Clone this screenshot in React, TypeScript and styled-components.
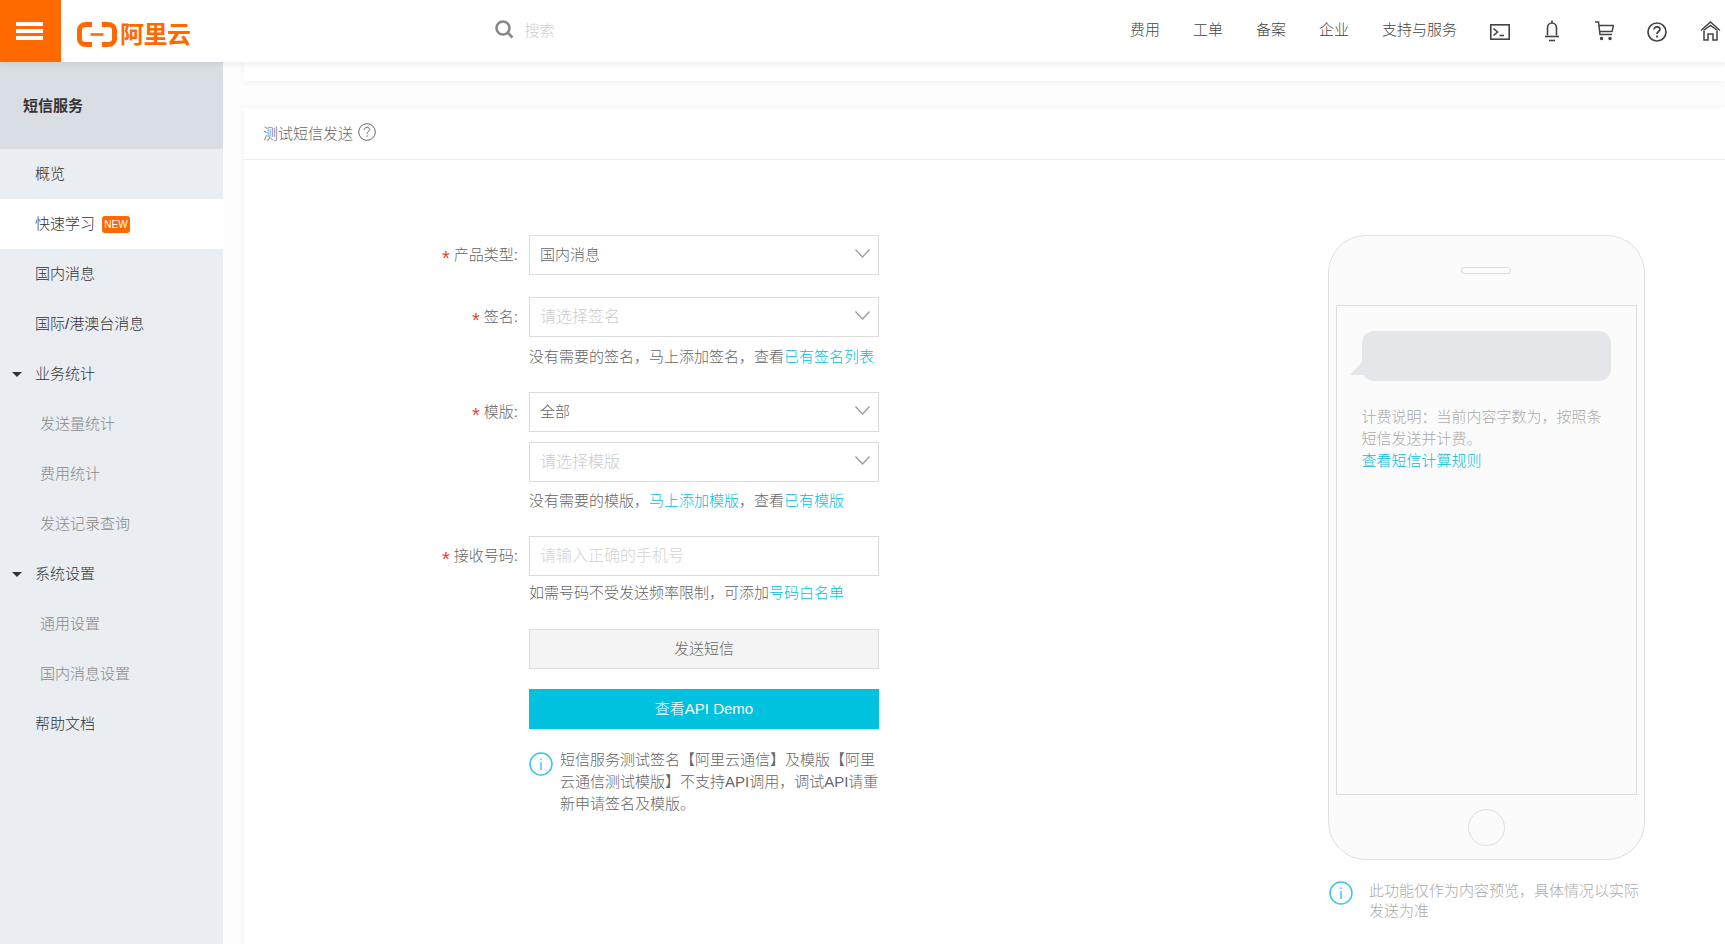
import React from 'react'
import styled, { createGlobalStyle } from 'styled-components'

const GlobalStyle = createGlobalStyle`
  html, body {
    margin: 0;
    padding: 0;
    height: 100%;
    overflow: hidden;
    background: #fdfdfd;
    font-family: "Liberation Sans", "Noto Sans CJK SC", sans-serif;
    font-size: 15px;
    font-weight: 300;
    color: #666;
  }
  * { box-sizing: border-box; }
`

const Page = styled.div`
  height: 944px;
  display: flex;
  flex-direction: column;
  overflow: hidden;
`

const Header = styled.header`
  height: 62px;
  flex: none;
  display: flex;
  align-items: center;
  background: #fff;
  box-shadow: 0 2px 6px rgba(0, 0, 0, 0.08);
  position: relative;
  z-index: 2;
`

const Burger = styled.div`
  width: 61px;
  height: 62px;
  background: #ff6a00;
  display: flex;
  flex-direction: column;
  justify-content: center;
  gap: 3px;
  padding-left: 16px;

  span {
    width: 27px;
    height: 4px;
    background: #fff;
  }
`

const Logo = styled.div`
  display: flex;
  align-items: center;
  gap: 3px;
  margin-left: 16px;
  margin-top: 7px;
  color: #ff6a00;
  font-size: 24px;
  font-weight: 700;
  letter-spacing: -0.5px;
  line-height: 25px;
`

const Search = styled.div`
  display: flex;
  align-items: center;
  gap: 11px;
  margin-left: 304px;
  color: #ccc;
  font-size: 15px;
  margin-top: -3px;
`

const Nav = styled.nav`
  margin-left: auto;
  padding-right: 4px;
  display: flex;
  align-items: center;
  gap: 33px;
  color: #444;
  font-size: 15px;

  span {
    padding-bottom: 5px;
  }
`

const Body = styled.div`
  flex: 1;
  display: flex;
  min-height: 0;
`

const Sidebar = styled.aside`
  width: 223px;
  flex: none;
  background: #eaedf1;
`

const SideTitle = styled.div`
  height: 87px;
  display: flex;
  align-items: center;
  padding: 0 0 2px 23px;
  background: #d9dee4;
  color: #333;
  font-weight: 700;
`

const SideItem = styled.div<{ $sub?: boolean; $active?: boolean; $group?: boolean }>`
  height: 50px;
  display: flex;
  align-items: center;
  padding-left: ${(p) => (p.$sub ? '40px' : p.$group ? '12px' : '35px')};
  padding-bottom: 4px;
  background: ${(p) => (p.$active ? '#fff' : 'transparent')};
  color: ${(p) => (p.$sub ? '#888' : '#333')};
`

const Caret = styled.i`
  width: 0;
  height: 0;
  margin-top: 4px;
  margin-right: 13px;
  border-left: 5px solid transparent;
  border-right: 5px solid transparent;
  border-top: 5px solid #333;
`

const NewBadge = styled.span`
  margin: 5px 0 0 7px;
  width: 28px;
  height: 17px;
  border-radius: 3px;
  background: #ff6a00;
  color: #fff;
  font-size: 10px;
  line-height: 17px;
  text-align: center;
`

const Main = styled.main`
  flex: 1;
  min-width: 0;
  padding-left: 21px;
  overflow: hidden;
`

const TopCard = styled.div`
  height: 19px;
  background: #fff;
  box-shadow: 0 1px 8px rgba(0, 0, 0, 0.05);
`

const Card = styled.section`
  margin-top: 27px;
  background: #fff;
  box-shadow: 0 0 8px rgba(0, 0, 0, 0.05);
  height: 900px;
`

const CardHead = styled.div`
  height: 52px;
  display: flex;
  align-items: center;
  gap: 5px;
  padding: 0 0 3px 19px;
  border-bottom: 1px solid #ececec;
  color: #666;
`

const CardBody = styled.div`
  display: flex;
`

const Form = styled.div`
  width: 635px;
  padding-top: 75px;
  margin-right: 449px;
`

const Row = styled.div<{ $bottom: number }>`
  display: flex;
  margin-bottom: ${(p) => p.$bottom}px;
`

const Label = styled.label`
  width: 285px;
  height: 40px;
  flex: none;
  display: flex;
  align-items: center;
  justify-content: flex-end;
  padding: 0 11px 4px 0;
  color: #666;

  em {
    color: #e5462d;
    font-size: 20px;
    font-style: normal;
    line-height: 1;
    margin-right: 4px;
    margin-top: 9px;
  }
`

const Control = styled.div`
  width: 350px;
  flex: none;
  display: flex;
  flex-direction: column;
`

const Select = styled.div<{ $empty?: boolean; $top?: number }>`
  height: 40px;
  margin-top: ${(p) => p.$top ?? 0}px;
  display: flex;
  align-items: center;
  justify-content: space-between;
  padding: 0 8px 4px 10px;
  border: 1px solid #ddd;
  background: #fff;
  font-size: ${(p) => (p.$empty ? '16px' : '15px')};
  color: ${(p) => (p.$empty ? '#ccc' : '#666')};
`

const TextInput = styled.input`
  height: 40px;
  width: 100%;
  padding: 0 10px;
  border: 1px solid #ddd;
  outline: none;
  background: #fff;
  font: inherit;
  font-size: 16px;
  color: #666;

  &::placeholder {
    color: #d4d4d4;
    opacity: 1;
  }
`

const Helper = styled.div<{ $top: number }>`
  margin-top: ${(p) => p.$top}px;
  height: 20px;
  line-height: 20px;
  white-space: nowrap;
  color: #666;

  a {
    color: #00c1de;
    text-decoration: none;
  }
`

const Button = styled.button<{ $primary?: boolean }>`
  height: 40px;
  width: 100%;
  padding: 0 0 3px;
  font: inherit;
  border: 1px solid ${(p) => (p.$primary ? '#00c1de' : '#ddd')};
  background: ${(p) => (p.$primary ? '#00c1de' : '#f4f4f4')};
  color: ${(p) => (p.$primary ? '#fff' : '#666')};
`

const Tip = styled.div`
  margin-top: 20px;
  display: flex;
  gap: 7px;
  line-height: 22px;
  color: #666;

  svg {
    flex: none;
    margin-top: 3px;
  }
`

const Preview = styled.div`
  width: 317px;
  flex: none;
  padding-top: 75px;
`

const Phone = styled.div`
  height: 625px;
  border: 1px solid #e0e0e0;
  border-radius: 38px;
  background: #fbfbfc;
  display: flex;
  flex-direction: column;
  align-items: center;
  padding: 31px 1px 0 0;
`

const Speaker = styled.div`
  width: 50px;
  height: 7px;
  flex: none;
  border: 1px solid #ddd;
  border-radius: 3px;
`

const Screen = styled.div`
  margin-top: 31px;
  width: 301px;
  height: 490px;
  flex: none;
  border: 1px solid #ddd;
  padding: 25px;
  color: #aaa;
  line-height: 22px;

  a {
    color: #00c1de;
    text-decoration: none;
  }
`

const Bubble = styled.div`
  height: 50px;
  margin-bottom: 25px;
  border-radius: 12px;
  background: #e5e6ea;
  position: relative;

  &::before {
    content: '';
    position: absolute;
    left: -12px;
    bottom: 6px;
    width: 0;
    height: 0;
    border-bottom: 13px solid #e5e6ea;
    border-left: 12px solid transparent;
    border-right: 4px solid transparent;
  }
`

const HomeButton = styled.div`
  margin-top: 14px;
  width: 37px;
  height: 37px;
  flex: none;
  border: 1px solid #ddd;
  border-radius: 50%;
`

const Note = styled.div`
  margin-top: 21px;
  padding-left: 1px;
  display: flex;
  gap: 16px;
  line-height: 20px;
  color: #aaa;
  white-space: nowrap;

  svg {
    flex: none;
  }
`

const BellSlot = styled.div`
  display: flex;
  margin: 0 2px 0 1px;
`

const Chevron = () => (
  <svg width="15" height="9" viewBox="0 0 15 9" fill="none" stroke="#999" strokeWidth="1.2">
    <path d="M0.5 0.5 L7.5 8 L14.5 0.5" />
  </svg>
)

const InfoIcon = () => (
  <svg width="24" height="24" viewBox="0 0 24 24" fill="none">
    <circle cx="12" cy="12" r="11" stroke="#3dc3e6" strokeWidth="1.5" />
    <path d="M12 10 V18" stroke="#3dc3e6" strokeWidth="1.4" />
    <path d="M12 6.5 V8" stroke="#3dc3e6" strokeWidth="1.4" />
  </svg>
)

const LogoMark = () => (
  <svg width="40" height="25" viewBox="0 0 40 25" fill="none">
    <path
      d="M15 2.5 H9 C5 2.5 2.5 5 2.5 8 V17 C2.5 20 5 22.5 9 22.5 H15"
      stroke="#ff6a00"
      strokeWidth="5"
    />
    <path
      d="M25 2.5 H31 C35 2.5 37.5 5 37.5 8 V17 C37.5 20 35 22.5 31 22.5 H25"
      stroke="#ff6a00"
      strokeWidth="5"
    />
    <path d="M13.5 12.5 H26.5" stroke="#ff6a00" strokeWidth="2.6" />
  </svg>
)

const SearchIcon = () => (
  <svg width="19" height="19" viewBox="0 0 19 19" fill="none" stroke="#888" strokeWidth="2.6">
    <circle cx="8" cy="8" r="6.5" />
    <path d="M12.5 12.5 L17.5 17.5" />
  </svg>
)

const TerminalIcon = () => (
  <svg width="20" height="18" viewBox="0 0 20 18" fill="none" stroke="#444" strokeWidth="1.6">
    <rect x="0.8" y="2.8" width="18.4" height="14.4" />
    <path d="M3.5 6.5 L7.5 10 L3.5 13.5" />
    <path d="M9.5 13.5 H14" />
  </svg>
)

const BellIcon = () => (
  <svg width="16" height="22" viewBox="0 0 16 22" fill="none" stroke="#444" strokeWidth="1.6">
    <path d="M8 0.5 V3" />
    <path d="M3.5 15.5 V8 C3.5 5 5.5 3 8 3 C10.5 3 12.5 5 12.5 8 V15.5" />
    <path d="M1 16.5 H15" />
    <path d="M5 20.5 H11" />
  </svg>
)

const CartIcon = () => (
  <svg width="19" height="20" viewBox="0 0 19 20" fill="none" stroke="#444" strokeWidth="1.5">
    <path d="M0 1 H3.5 L5 13.5 H17" />
    <path d="M4 4.5 H18.5 L17 10.5 H4.8" />
    <circle cx="6.5" cy="17.5" r="1" fill="#444" />
    <circle cx="15" cy="17.5" r="1" fill="#444" />
  </svg>
)

const HelpIcon = () => (
  <svg width="20" height="22" viewBox="0 0 20 22" fill="none" stroke="#444" strokeWidth="1.7">
    <circle cx="10" cy="12" r="9" />
    <path d="M7 9.6 C7 7.8 8.3 6.8 10 6.8 C11.7 6.8 13 7.8 13 9.4 C13 11.4 10 11.6 10 14" />
    <path d="M10 15.6 V17.4" />
  </svg>
)

const HomeIcon = () => (
  <svg width="21" height="20" viewBox="0 0 21 20" fill="none" stroke="#444" strokeWidth="1.5">
    <path d="M1 9.5 L10.5 1 L20 9.5" />
    <path d="M3.5 9.5 L10.5 4.5 L17.5 9.5" />
    <path d="M4 10 V19 H8 V13 H13 V19 H17 V10" />
  </svg>
)

const QuestionIcon = () => (
  <svg width="18" height="18" viewBox="0 0 18 18" fill="none" stroke="#666" strokeWidth="1">
    <circle cx="9" cy="9" r="8.3" />
    <path d="M6.5 6.8 C6.5 5 7.6 4.2 9 4.2 C10.4 4.2 11.5 5 11.5 6.6 C11.5 8.4 9 8.6 9 10.8" />
    <path d="M9 12.4 V13.8" />
  </svg>
)

const App = () => (
  <>
    <GlobalStyle />
    <Page>
      <Header>
        <Burger>
          <span />
          <span />
          <span />
        </Burger>
        <Logo>
          <LogoMark />
          <span>阿里云</span>
        </Logo>
        <Search>
          <SearchIcon />
          <span>搜索</span>
        </Search>
        <Nav>
          <span>费用</span>
          <span>工单</span>
          <span>备案</span>
          <span>企业</span>
          <span>支持与服务</span>
          <TerminalIcon />
          <BellSlot>
            <BellIcon />
          </BellSlot>
          <CartIcon />
          <HelpIcon />
          <HomeIcon />
        </Nav>
      </Header>
      <Body>
        <Sidebar>
          <SideTitle>短信服务</SideTitle>
          <SideItem>概览</SideItem>
          <SideItem $active>
            快速学习
            <NewBadge>NEW</NewBadge>
          </SideItem>
          <SideItem>国内消息</SideItem>
          <SideItem>国际/港澳台消息</SideItem>
          <SideItem $group>
            <Caret />
            业务统计
          </SideItem>
          <SideItem $sub>发送量统计</SideItem>
          <SideItem $sub>费用统计</SideItem>
          <SideItem $sub>发送记录查询</SideItem>
          <SideItem $group>
            <Caret />
            系统设置
          </SideItem>
          <SideItem $sub>通用设置</SideItem>
          <SideItem $sub>国内消息设置</SideItem>
          <SideItem>帮助文档</SideItem>
        </Sidebar>
        <Main>
          <TopCard />
          <Card>
            <CardHead>
              测试短信发送
              <QuestionIcon />
            </CardHead>
            <CardBody>
              <Form>
                <Row $bottom={22}>
                  <Label>
                    <em>*</em>产品类型:
                  </Label>
                  <Control>
                    <Select>
                      国内消息
                      <Chevron />
                    </Select>
                  </Control>
                </Row>
                <Row $bottom={25}>
                  <Label>
                    <em>*</em>签名:
                  </Label>
                  <Control>
                    <Select $empty>
                      请选择签名
                      <Chevron />
                    </Select>
                    <Helper $top={10}>
                      没有需要的签名，马上添加签名，查看<a>已有签名列表</a>
                    </Helper>
                  </Control>
                </Row>
                <Row $bottom={25}>
                  <Label>
                    <em>*</em>模版:
                  </Label>
                  <Control>
                    <Select>
                      全部
                      <Chevron />
                    </Select>
                    <Select $empty $top={10}>
                      请选择模版
                      <Chevron />
                    </Select>
                    <Helper $top={9}>
                      没有需要的模版，<a>马上添加模版</a>，查看<a>已有模版</a>
                    </Helper>
                  </Control>
                </Row>
                <Row $bottom={26}>
                  <Label>
                    <em>*</em>接收号码:
                  </Label>
                  <Control>
                    <TextInput placeholder="请输入正确的手机号" />
                    <Helper $top={7}>
                      如需号码不受发送频率限制，可添加<a>号码白名单</a>
                    </Helper>
                  </Control>
                </Row>
                <Row $bottom={20}>
                  <Label />
                  <Control>
                    <Button>发送短信</Button>
                  </Control>
                </Row>
                <Row $bottom={0}>
                  <Label />
                  <Control>
                    <Button $primary>查看API Demo</Button>
                    <Tip>
                      <InfoIcon />
                      <span>
                        短信服务测试签名【阿里云通信】及模版【阿里云通信测试模版】不支持API调用，调试API请重新申请签名及模版。
                      </span>
                    </Tip>
                  </Control>
                </Row>
              </Form>
              <Preview>
                <Phone>
                  <Speaker />
                  <Screen>
                    <Bubble />
                    计费说明：当前内容字数为，按照条
                    <br />
                    短信发送并计费。
                    <br />
                    <a>查看短信计算规则</a>
                  </Screen>
                  <HomeButton />
                </Phone>
                <Note>
                  <InfoIcon />
                  <span>
                    此功能仅作为内容预览，具体情况以实际
                    <br />
                    发送为准
                  </span>
                </Note>
              </Preview>
            </CardBody>
          </Card>
        </Main>
      </Body>
    </Page>
  </>
)

export default App
